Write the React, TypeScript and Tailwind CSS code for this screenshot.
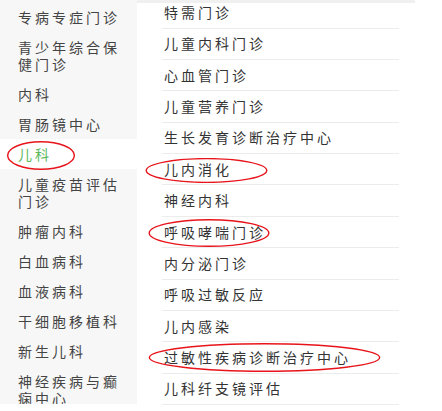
import React from 'react';

const sideItems = [
  '专病专症门诊',
  '青少年综合保健门诊',
  '内科',
  '胃肠镜中心',
  '儿科',
  '儿童疫苗评估门诊',
  '肿瘤内科',
  '白血病科',
  '血液病科',
  '干细胞移植科',
  '新生儿科',
  '神经疾病与癫痫中心',
];

const subItems = [
  '特需门诊',
  '儿童内科门诊',
  '心血管门诊',
  '儿童营养门诊',
  '生长发育诊断治疗中心',
  '儿内消化',
  '神经内科',
  '呼吸哮喘门诊',
  '内分泌门诊',
  '呼吸过敏反应',
  '儿内感染',
  '过敏性疾病诊断治疗中心',
  '儿科纤支镜评估',
];

// hand-drawn red circles over the list
function Mark({ className }: { className: string }) {
  return (
    <svg className={`absolute pointer-events-none ${className}`} viewBox="0 0 100 40" preserveAspectRatio="none">
      <ellipse cx="50" cy="20" rx="49" ry="19" fill="none" stroke="#e8141b" strokeWidth="1.4" vectorEffect="non-scaling-stroke" />
    </svg>
  );
}

export default function App() {
  return (
    <div
      className="relative flex w-[442px] h-[411px] bg-white overflow-hidden text-[14px] tracking-[3px]"
      style={{ fontFamily: '"Noto Sans CJK SC", "Noto Sans", sans-serif' }}
    >
      {/* left menu */}
      <div className="w-[137px] shrink-0 self-start h-[404px] overflow-hidden bg-[#f7f7f7]">
        <ul className="pt-[2px]">
          {sideItems.map((t) => {
            const active = t === '儿科';
            return (
              <li
                key={t}
                className={`pl-[18px] pr-[12px] py-[6.5px] leading-[17px] ${
                  active ? 'bg-white text-[#5cb85c]' : 'text-[#444]'
                }`}
              >
                {t}
              </li>
            );
          })}
        </ul>
      </div>

      {/* right list */}
      <div className="flex-1 flex flex-col min-w-0">
        <div className="h-[3px] w-[278px] bg-[#f0f0f0] shrink-0" />
        <div className="flex-1 overflow-hidden">
          <ul className="-mt-[5.7px] ml-[25px] mr-[43px]">
            {subItems.map((t) => (
              <li
                key={t}
                className="h-[31.36px] box-border border-b border-[#ececec] pl-[2px] flex items-center text-[#333]"
              >
                {t}
              </li>
            ))}
          </ul>
        </div>
      </div>

      <Mark className="left-[7px] top-[141px] w-[68px] h-[29px]" />
      <Mark className="left-[145px] top-[158px] w-[123px] h-[25px]" />
      <Mark className="left-[148px] top-[219px] w-[122px] h-[28px]" />
      <Mark className="left-[147px] top-[343px] w-[235px] h-[29px]" />
    </div>
  );
}
